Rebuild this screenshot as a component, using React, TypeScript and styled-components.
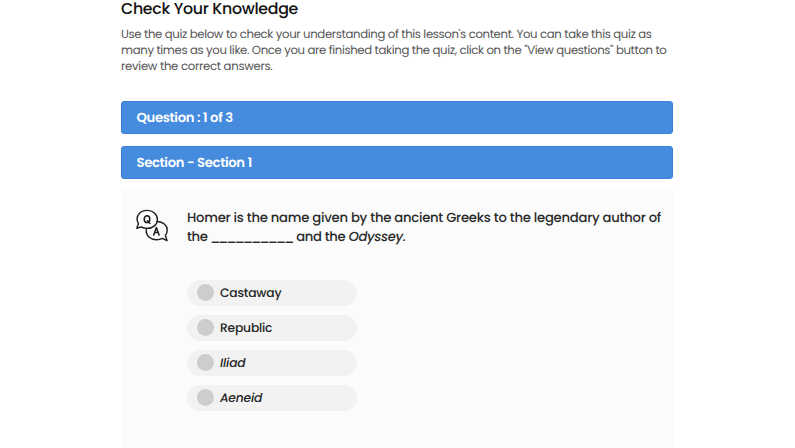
import React from "react";
import styled, { createGlobalStyle } from "styled-components";

const GlobalStyle = createGlobalStyle`
  * { box-sizing: border-box; }
  body {
    margin: 0;
    background: #fff;
    font-family: Poppins, Inter, sans-serif;
    font-feature-settings: "cv11";
    text-rendering: geometricPrecision;
    overflow: hidden;
  }
`;

const Page = styled.main`
  width: 552px;
  height: 448px;
  margin-left: 121px;
  display: flex;
  flex-direction: column;
`;

const Title = styled.h1`
  margin: 0;
  height: 27px;
  font-size: 15.8px;
  font-weight: 500;
  line-height: 18px;
  letter-spacing: -0.3px;
  color: #111;
`;

const Intro = styled.p`
  margin: 0 0 26px;
  font-size: 11.7px;
  line-height: 16px;
  color: #555;
`;

const Line = styled.span<{ $spacing?: number }>`
  display: block;
  white-space: nowrap;
  letter-spacing: ${({ $spacing = 0 }) => $spacing}px;
`;

const Bar = styled.div`
  height: 33px;
  flex: none;
  margin-bottom: 12px;
  padding: 0 14px 0 14.5px;
  border: 1px solid #3a82d9;
  border-radius: 3px;
  background: #458cde;
  color: #fff;
  font-size: 13.2px;
  font-weight: 600;
  line-height: 31px;
  letter-spacing: -0.34px;
`;

const Panel = styled.section`
  flex: 1;
  margin-top: -3px;
  padding: 20px 0 0 14px;
  display: flex;
  align-items: flex-start;
  background: #fbfbfb;
`;

const QuestionIcon = styled.svg`
  width: 34px;
  height: 34px;
  flex: none;
  margin: 1px 18px 0 0;
`;

const Body = styled.div`
  flex: 1;
  display: flex;
  flex-direction: column;
`;

const Prompt = styled.div`
  margin-bottom: 34px;
  font-size: 13.2px;
  font-weight: 500;
  line-height: 19px;
  color: #2b2b2b;
`;

const Blank = styled.span`
  letter-spacing: -2.3px;
  margin: 0 1px 0 -0.8px;
`;

const Options = styled.div`
  display: flex;
  flex-direction: column;
  gap: 9px;
`;

const Option = styled.label<{ $italic?: boolean }>`
  width: 170px;
  height: 26px;
  padding-left: 10px;
  display: flex;
  align-items: center;
  gap: 6px;
  border-radius: 13px;
  background: #f2f2f2;
  color: #252525;
  font-size: 12.3px;
  line-height: 20px;
  letter-spacing: -0.2px;
  font-weight: 500;
  font-style: ${({ $italic }) => ($italic ? "italic" : "normal")};
`;

const OptionText = styled.span`
  padding-top: 2px;
`;

const Radio = styled.span`
  width: 17px;
  height: 17px;
  margin-top: -1px;
  border-radius: 50%;
  background: #cdcdcd;
`;

const options = [
  { label: "Castaway" },
  { label: "Republic" },
  { label: "Iliad", italic: true },
  { label: "Aeneid", italic: true },
];

export default function App() {
  return (
    <>
      <GlobalStyle />
      <Page>
        <Title>Check Your Knowledge</Title>
        <Intro>
          <Line $spacing={-0.34}>
            Use the quiz below to check your understanding of this lesson's content. You can take this quiz as
          </Line>
          <Line $spacing={-0.345}>
            many times as you like. Once you are finished taking the quiz, click on the "View questions" button to
          </Line>
          <Line $spacing={-0.29}>review the correct answers.</Line>
        </Intro>
        <Bar>Question : 1 of 3</Bar>
        <Bar>Section - Section 1</Bar>
        <Panel>
          <QuestionIcon viewBox="0 0 34 34" fill="none" stroke="#1c1c1c" strokeWidth="1.4" strokeLinejoin="round" strokeLinecap="round">
            <path d="M1.8 19.3 L3.4 14.7 C-.2 8.2 4.2 1.4 12 1.4 C18 1.4 22.4 5.4 22.4 10.4 C22.4 15.6 18 19.4 12 19.4 C9.8 19.4 7.7 18.8 6.1 17.8 Z" />
            <path d="M22.2 12.5 C28 12.6 32.2 16.4 32.2 21.2 C32.2 23.2 31.6 25 30.4 26.5 L32.1 31.6 L27.4 29.4 C25.8 30.3 23.8 30.8 21.7 30.8 C15.6 30.8 11.2 26.9 11.2 21.8 Q11.2 20.5 11.5 19.5" />
            <ellipse cx="12" cy="10.2" rx="2.8" ry="3.4" strokeWidth="1.5" />
            <path d="M12.5 11.8 L14.9 14.4" strokeWidth="1.4" />
            <path d="M18.7 26 L21.4 18.4 L24.1 26 M19.7 23.6 H23.1" strokeWidth="1.5" />
          </QuestionIcon>
          <Body>
            <Prompt>
              <Line $spacing={-0.25}>Homer is the name given by the ancient Greeks to the legendary author of</Line>
              <Line $spacing={-0.34}>
                the <Blank>__________</Blank> and the <em>Odyssey.</em>
              </Line>
            </Prompt>
            <Options>
              {options.map((o) => (
                <Option key={o.label} $italic={o.italic}>
                  <Radio />
                  <OptionText>{o.label}</OptionText>
                </Option>
              ))}
            </Options>
          </Body>
        </Panel>
      </Page>
    </>
  );
}
